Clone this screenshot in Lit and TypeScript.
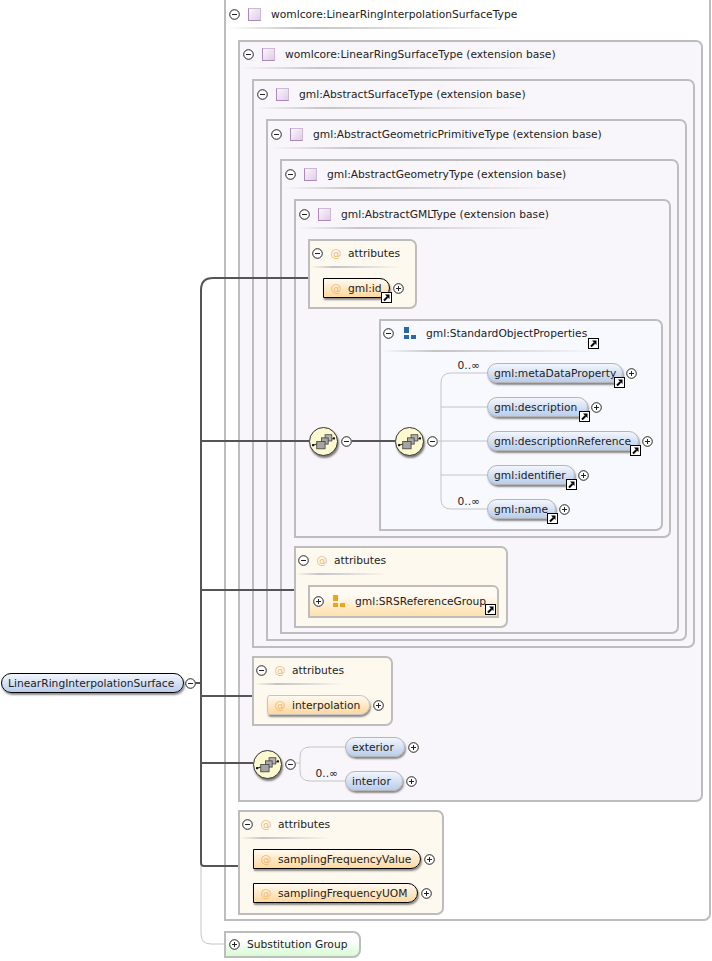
import { LitElement, html, css, svg, nothing } from "lit";
import { customElement } from "lit/decorators.js";

const exp = (plus: boolean) => html`<svg class="exp" viewBox="0 0 11 11" width="11" height="11">
  <circle cx="5.5" cy="5.5" r="4.8" fill="#fff" stroke="#222" stroke-width="1"/>
  <path d="M3 5.5h5${plus ? "M5.5 3v5" : ""}" stroke="#222" stroke-width="1" fill="none"/></svg>`;

const badge = () => html`<svg class="badge" viewBox="0 0 11 11" width="11" height="11">
  <rect x=".5" y=".5" width="10" height="10" fill="#fff" stroke="#000"/>
  <path d="M3 8.5 6.5 5" stroke="#000" stroke-width="2" fill="none"/><path d="M4 2.5h4.5V7z" fill="#000"/></svg>`;

const typeIcon = html`<span class="ticon"></span>`;
const groupIcon = (c: string) => html`<svg class="gicon" viewBox="0 0 12 12" width="12" height="12">
  <rect x="0" y="0" width="5" height="6" fill="${c}"/><rect x="0" y="8" width="5" height="4" fill="${c}"/><rect x="7" y="8" width="5" height="4" fill="${c}"/></svg>`;

const compositor = html`<span class="comp"><svg viewBox="0 0 24 24" width="25" height="25">
  <path d="M2 15.5 22 9" stroke="#222" stroke-width="1" fill="none"/>
  <rect x="1" y="14.5" width="2" height="2" fill="#111"/><rect x="21" y="8" width="2" height="2" fill="#111"/>
  <rect x="13.5" y="5.5" width="6.5" height="6" fill="#b4b4b4" stroke="#444" stroke-width=".8"/>
  <rect x="10" y="8.5" width="6.5" height="6" fill="#a8a8a8" stroke="#444" stroke-width=".8"/>
  <rect x="5.5" y="12" width="8" height="7" fill="#a4a4a4" stroke="#444" stroke-width=".8"/></svg></span>`;

const head = (icon: unknown, label: unknown, extra: unknown = nothing) => html`<div class="head">
  <div class="hrow">${exp(false)}${icon}<span class="lbl">${label}</span>${extra}</div><div class="rule"></div></div>`;

const at = html`<span class="at">@</span>`;

interface Row { n: string; w: number; occ?: boolean; link?: boolean }
const rows = (list: Row[]) => html`<div class="rows">
  ${list.map(r => html`<div class="row">
    ${r.occ ? html`<span class="occ">0..∞</span>` : nothing}
    <span class="pill el" style="width:${r.w}px">${r.n}${r.link ? badge() : nothing}</span>${exp(true)}
  </div>`)}</div>`;

const attr = (n: string, cls: string, w: number, link = false) => html`<div class="arow">
  <span class="pill attr ${cls}" style="width:${w}px">${at}${n}${link ? badge() : nothing}</span>${exp(true)}</div>`;

const lines = svg`
  <g fill="none" stroke="#c4c4c4" stroke-width="1">
    <path d="M201 866V934q0 10 10 10H224"/>
    <path d="M487 373H451q-10 0-10 10V499q0 10 10 10H487M441 407H487M437 441H487M441 475H487"/>
    <path d="M296 763H300V757q0-10 10-10H345M300 763V771q0 10 10 10H345"/>
  </g>
  <g fill="none" stroke="#555" stroke-width="2">
    <path d="M308 278H213q-12 0-12 12V863q0 3 3 3H238"/>
    <path d="M195 683H201M201 441H309M201 590H294M201 696H252M201 763H253M352 441H395"/>
  </g>`;

@customElement("app-root")
export class AppRoot extends LitElement {
  static styles = css`
    :host { display: block; width: 712px; height: 961px; position: relative; overflow: hidden; background: #fff;
      font: 10.7px "DejaVu Sans", sans-serif; color: #222; }
    .page { display: flex; align-items: flex-start; }
    .left { width: 224px; flex: none; padding-top: 673px; box-sizing: border-box; display: flex; padding-left: 1px; }
    .right { width: 487px; flex: none; display: flex; flex-direction: column; }
    .overlay { position: absolute; left: 0; top: 0; pointer-events: none; }

    .box { border: 2px solid #bdbdbd; border-radius: 0 7px 7px 0; padding: 0 6px 5px 12px; display: flex; flex-direction: column; gap: 8px; background: #f9f6fb; box-sizing: border-box; }
    .outer { background: #fff; border-top: 0; height: 921px; padding-top: 2px; border-radius: 0 0 7px 0; padding-bottom: 0; }
    .gap10 { gap: 10px; }
    .b5 { padding-bottom: 4px; }
    .b2 { padding-bottom: 2px; }
    .box > .head { margin-bottom: -8px; }
    .gap10 > .head { margin-bottom: -10px; }
    .b2 > .head { height: 37px; margin-bottom: -8px; padding-top: 0; }
    .inner > .head { padding-top: 1px; }

    .head { width: fit-content; padding-left: 3px; margin-left: -12px; height: 38px; box-sizing: border-box; }
    .hrow { display: flex; align-items: center; height: 24px; padding-right: 2px; }
    .rule { height: 2px; margin-top: 1px; margin-left: -2px; background: linear-gradient(90deg, rgba(190,190,190,0), #c4c4c4 25%, #d4d4d4 50%, rgba(190,190,190,0)); }
    .ticon { width: 11px; height: 11px; margin-left: 8px; flex: none; border: 1px solid #ad85bf; border-top-color: #cdb8d6; border-right-color: #cdb8d6; background: linear-gradient(135deg, #faf6fb, #dfcde6); }
    .hrow .lbl { margin-left: 10px; white-space: nowrap; }

    .attrs { border: 2px solid #bdbdbd; border-radius: 0 7px 7px 0; background: #fef9ef; padding: 0 0 0 13px; box-sizing: border-box; display: flex; flex-direction: column; gap: 14px; }
    .attrs > .head { height: 37px; margin-left: -13px; padding-left: 2px; margin-bottom: -14px; }
    .hrow .at { margin-left: 7px; width: 12px; text-align: center; color: #f0bb68; font-size: 11px; }
    .attrs .hrow .lbl { margin-left: 6px; }
    .a1 { width: 109px; height: 70px; }
    .a2 { width: 214px; height: 82px; }
    .a3 { width: 141px; height: 70px; }
    .a4 { width: 206px; height: 105px; }
    .arow { display: flex; align-items: center; height: 20px; }
    .attr .at { color: #f0bb68; width: 14px; margin-left: -19px; margin-right: 5px; display: inline-block; text-align: center; font-size: 11px; }
    .pill { position: relative; height: 20px; box-sizing: border-box; display: inline-flex; align-items: center; border: 1px solid #b5b5b5; white-space: nowrap; box-shadow: 1px 2px 2px rgba(0,0,0,.45); }
    .attr { border-radius: 0 10px 10px 0; padding: 0 0 0 24px; background: linear-gradient(#fffaf2, #fed89e); }
    .req { border-color: #000; }
    .opt { border-color: #c4c4c4; border-radius: 3px 10px 10px 3px; }
    .arow .exp, .row .exp { margin-left: 3px; flex: none; }
    .badge { position: absolute; right: -3px; bottom: -6px; }
    .group { margin-left: -1px; width: 191px; height: 33px; box-sizing: border-box; border: 2px solid #bdbdbd; border-radius: 0 6px 0 0; padding-left: 3px; display: flex; align-items: center; background: linear-gradient(#fffaf2 30%, #ffe0ab); position: relative; }
    .group .gicon { margin-left: 9px; margin-top: -1px; }
    .group .lbl { margin-left: 10px; }
    .group .badge { right: 1px; bottom: 1px; }

    .std { width: 284px; height: 212px; box-sizing: border-box; border: 2px solid #bdbdbd; border-radius: 0 7px 7px 0; background: #f8f9fe; }
    .std .head { height: 35px; margin-left: 0; padding-left: 2px; }
    .std .rule { margin-top: 5px; }
    .std .hrow .gicon { margin-left: 10px; }
    .std .hrow .lbl { margin-left: 10px; }
    .std .hrow .badge { position: static; margin-left: 1px; margin-top: 21px; flex: none; }
    .tree { display: flex; align-items: center; }
    .cwrap { display: flex; align-items: center; flex: none; }
    .cwrap .exp { margin-left: 3px; }
    .comp { width: 29px; height: 29px; box-sizing: border-box; border: 1px solid #333; border-radius: 50%; background: #fdf9cf; box-shadow: 1px 2px 2px rgba(0,0,0,.5); display: flex; align-items: center; justify-content: center; flex: none; margin-left: 1px; }
    .rows { display: flex; flex-direction: column; }
    .row { height: 34px; display: flex; align-items: center; position: relative; }
    .el { border-radius: 10px; padding: 0 0 0 6px; background: linear-gradient(#f2f6fd, #b9cdec); }
    .root { border-color: #000; }
    .occ { position: absolute; right: calc(100% + 7px); top: 3px; line-height: 14px; white-space: nowrap; }

    .t6row { display: flex; align-items: flex-start; }
    .t6row > .cwrap { margin-top: 108px; }
    .t6row > .std { margin-left: 27px; }
    .std .tree .cwrap { margin-left: 13px; }
    .std .tree .rows { margin-left: 49px; }
    .seq { display: flex; align-items: center; margin-top: -4px; }
    .seq .rows { margin-left: 49px; }
    .subst { margin-top: 10px; width: 137px; height: 27px; box-sizing: border-box; border: 2px solid #bdbdbd; border-radius: 0 8px 8px 0; padding-left: 3px; display: flex; align-items: center; background: linear-gradient(#fff 35%, #d6fbd2); }
    .subst .lbl { margin-left: 7px; }
    .rootrow { display: flex; align-items: center; }
    .rootrow .exp { margin-left: 1px; }
    .rootrow .el { padding: 0 9px 0 6px; }
  `;

  render() {
    const meta: Row[] = [
      { n: "gml:metaDataProperty", w: 136, occ: true, link: true },
      { n: "gml:description", w: 101, link: true },
      { n: "gml:descriptionReference", w: 152, link: true },
      { n: "gml:identifier", w: 88, link: true },
      { n: "gml:name", w: 69, occ: true, link: true },
    ];
    return html`<div class="page">
      <div class="left"><div class="rootrow"><span class="pill el root">LinearRingInterpolationSurface</span>${exp(false)}</div></div>
      <div class="right">
        <div class="box outer">
          ${head(typeIcon, "womlcore:LinearRingInterpolationSurfaceType")}
          <div class="box b2">
            ${head(typeIcon, "womlcore:LinearRingSurfaceType (extension base)")}
            <div class="box inner">
              ${head(typeIcon, "gml:AbstractSurfaceType (extension base)")}
              <div class="box inner">
                ${head(typeIcon, "gml:AbstractGeometricPrimitiveType (extension base)")}
                <div class="box inner b5">
                  ${head(typeIcon, "gml:AbstractGeometryType (extension base)")}
                  <div class="box inner gap10">
                    ${head(typeIcon, "gml:AbstractGMLType (extension base)")}
                    <div class="attrs a1">
                      ${head(at, "attributes")}
                      ${attr("gml:id", "req", 67, true)}
                    </div>
                    <div class="t6row">
                      <div class="cwrap">${compositor}${exp(false)}</div>
                      <div class="std">
                        ${head(groupIcon("#2a69a8"), "gml:StandardObjectProperties", badge())}
                        <div class="tree">
                          <div class="cwrap">${compositor}${exp(false)}</div>
                          ${rows(meta)}
                        </div>
                      </div>
                    </div>
                  </div>
                  <div class="attrs a2">
                    ${head(at, "attributes")}
                    <div class="group">${exp(true)}${groupIcon("#eea31f")}<span class="lbl">gml:SRSReferenceGroup</span>${badge()}</div>
                  </div>
                </div>
              </div>
            </div>
            <div class="attrs a3">
              ${head(at, "attributes")}
              ${attr("interpolation", "opt", 103)}
            </div>
            <div class="seq">
              <div class="cwrap">${compositor}${exp(false)}</div>
              ${rows([{ n: "exterior", w: 60 }, { n: "interior", w: 58, occ: true }])}
            </div>
          </div>
          <div class="attrs a4">
            ${head(at, "attributes")}
            ${attr("samplingFrequencyValue", "req", 168)}
            ${attr("samplingFrequencyUOM", "req", 165)}
          </div>
        </div>
        <div class="subst">${exp(true)}<span class="lbl">Substitution Group</span></div>
      </div>
    </div>
    <svg class="overlay" width="712" height="961">${lines}</svg>`;
  }
}
